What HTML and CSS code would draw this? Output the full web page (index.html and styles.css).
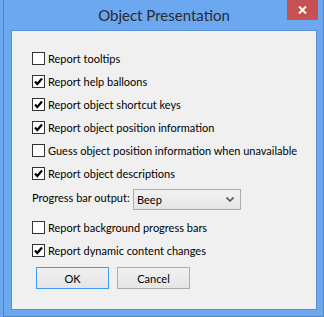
FILE: index.html
```html
<!DOCTYPE html>
<html>
<head>
<meta charset="utf-8">
<link rel="stylesheet" href="styles.css">
</head>
<body>
<div class="window">
  <div class="titlebar">
    <span class="title">Object Presentation</span>
    <div class="close">
      <svg width="9" height="8" viewBox="0 0 9 8"><path d="M1 0.5 L8 7.5 M8 0.5 L1 7.5" stroke="#fff" stroke-width="2" fill="none"/></svg>
    </div>
  </div>
  <div class="client">
    <div class="options">
      <div class="row"><span class="box"></span><span class="label">Report tooltips</span></div>
      <div class="row"><span class="box checked"><svg width="11" height="11" viewBox="0 0 11 11"><path d="M2 5.5 L4.3 8 L9 2.5" stroke="#000" stroke-width="2.2" fill="none"/></svg></span><span class="label">Report help balloons</span></div>
      <div class="row"><span class="box checked"><svg width="11" height="11" viewBox="0 0 11 11"><path d="M2 5.5 L4.3 8 L9 2.5" stroke="#000" stroke-width="2.2" fill="none"/></svg></span><span class="label">Report object shortcut keys</span></div>
      <div class="row"><span class="box checked"><svg width="11" height="11" viewBox="0 0 11 11"><path d="M2 5.5 L4.3 8 L9 2.5" stroke="#000" stroke-width="2.2" fill="none"/></svg></span><span class="label">Report object position information</span></div>
      <div class="row"><span class="box"></span><span class="label">Guess object position information when unavailable</span></div>
      <div class="row"><span class="box checked"><svg width="11" height="11" viewBox="0 0 11 11"><path d="M2 5.5 L4.3 8 L9 2.5" stroke="#000" stroke-width="2.2" fill="none"/></svg></span><span class="label">Report object descriptions</span></div>
      <div class="select-row">
        <span class="select-label">Progress bar output:</span>
        <div class="select"><span>Beep</span><svg width="8" height="5" viewBox="0 0 8 5"><path d="M0.5 0.5 L4 4 L7.5 0.5" stroke="#555" stroke-width="1.6" fill="none"/></svg></div>
      </div>
      <div class="row"><span class="box"></span><span class="label">Report background progress bars</span></div>
      <div class="row"><span class="box checked"><svg width="11" height="11" viewBox="0 0 11 11"><path d="M2 5.5 L4.3 8 L9 2.5" stroke="#000" stroke-width="2.2" fill="none"/></svg></span><span class="label">Report dynamic content changes</span></div>
    </div>
    <div class="buttons">
      <button class="btn default">OK</button>
      <button class="btn">Cancel</button>
    </div>
  </div>
</div>
</body>
</html>
```
FILE: styles.css
```css
html, body {
  margin: 0;
  padding: 0;
}
body {
  width: 324px;
  height: 317px;
  overflow: hidden;
  background: #6ca8f0;
  font-family: Lato, "Noto Sans", sans-serif;
  font-size: 11px;
  color: #000;
}
.window {
  box-sizing: border-box;
  margin-left: 3px;
  width: 321px;
  height: 317px;
  background: #6ca8f0;
  border: 1px solid #4f86c8;
  border-top: none;
  padding: 0 5px 6px 7px;
  display: flex;
  flex-direction: column;
}
.titlebar {
  position: relative;
  height: 30px;
  display: flex;
  align-items: center;
  justify-content: center;
}
.title {
  font-size: 15px;
  color: #2b2b2b;
  margin-left: -1px;
  margin-top: -1px;
}
.close {
  position: absolute;
  top: 0;
  right: 0;
  width: 31px;
  height: 20px;
  background: #c75050;
  display: flex;
  align-items: center;
  justify-content: center;
}
.close svg { display: block; }
.client {
  box-sizing: border-box;
  width: 306px;
  height: 280px;
  background: #f0f0f0;
  border: 1px solid #5c8fd0;
  padding: 16px 0 0 20px;
  display: flex;
  flex-direction: column;
}
.options {
  display: flex;
  flex-direction: column;
}
.row {
  height: 23px;
  display: flex;
  align-items: center;
}
.box {
  box-sizing: border-box;
  width: 13px;
  height: 13px;
  border: 1px solid #333;
  background: #fff;
  margin-right: 3px;
  display: flex;
  align-items: center;
  justify-content: center;
}
.box svg { display: block; }
.label {
  white-space: nowrap;
}
.select-row {
  height: 31px;
  display: flex;
  align-items: flex-start;
}
.select-label {
  width: 101px;
  margin-top: 6px;
  white-space: nowrap;
}
.select {
  box-sizing: border-box;
  margin-top: 4px;
  width: 108px;
  height: 21px;
  border: 1px solid #acacac;
  background: linear-gradient(#f2f2f2, #e5e5e5);
  display: flex;
  align-items: center;
  justify-content: space-between;
  padding: 0 6px 0 3px;
}
.select svg { display: block; }
.buttons {
  display: flex;
  gap: 8px;
  margin-top: 5px;
  margin-left: 4px;
}
.btn {
  box-sizing: border-box;
  width: 73px;
  height: 22px;
  border: 1px solid #acacac;
  background: linear-gradient(#f0f0f0, #e5e5e5);
  font-family: Lato, "Noto Sans", sans-serif;
  font-size: 11px;
  color: #000;
  padding: 0;
  border-radius: 0;
}
.btn.default {
  border-color: #3c9bf0;
}
```
